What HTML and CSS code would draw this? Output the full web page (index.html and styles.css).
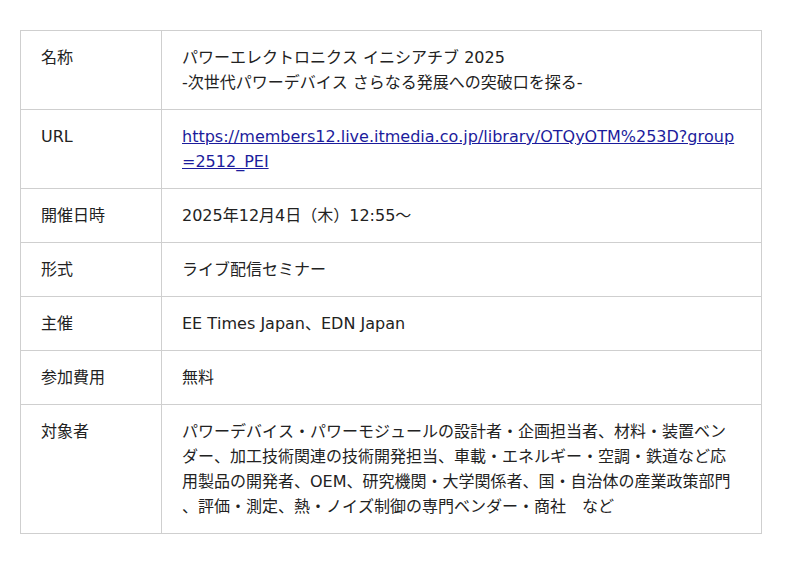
FILE: index.html
```html
<!DOCTYPE html>
<html lang="ja">
<head>
<meta charset="utf-8">
<link rel="stylesheet" href="styles.css">
</head>
<body>
<table class="info">
<colgroup><col class="c-label"><col class="c-value"></colgroup>
<tbody>
<tr><th>名称</th><td>パワーエレクトロニクス イニシアチブ 2025<br>-次世代パワーデバイス さらなる発展への突破口を探る-</td></tr>
<tr><th>URL</th><td><a href="#">https://members12.live.itmedia.co.jp/library/OTQyOTM%253D?group=2512_PEI</a></td></tr>
<tr><th>開催日時</th><td>2025年12月4日（木）12:55〜</td></tr>
<tr><th>形式</th><td>ライブ配信セミナー</td></tr>
<tr><th>主催</th><td>EE Times Japan、EDN Japan</td></tr>
<tr><th>参加費用</th><td>無料</td></tr>
<tr><th>対象者</th><td>パワーデバイス・パワーモジュールの設計者・企画担当者、材料・装置ベンダー、加工技術関連の技術開発担当、車載・エネルギー・空調・鉄道など応用製品の開発者、OEM、研究機関・大学関係者、国・自治体の産業政策部門、評価・測定、熱・ノイズ制御の専門ベンダー・商社　など</td></tr>
</tbody>
</table>
</body>
</html>
```
FILE: styles.css
```css
html, body {
  margin: 0;
  padding: 0;
  background: #fff;
}
body {
  padding: 30px 20px;
  font-family: "DejaVu Sans", "Noto Sans CJK JP", sans-serif;
  font-size: 16px;
  color: #222;
  font-kerning: none;
  text-spacing-trim: space-all;
}
.info {
  width: 742px;
  border-collapse: collapse;
  table-layout: fixed;
}
.c-label { width: 141px; }
.info th, .info td {
  border: 1px solid #cfcfcf;
  padding: 14px 20px;
  line-height: 25px;
  text-align: left;
  vertical-align: top;
  font-weight: normal;
  word-break: break-all;
  line-break: anywhere;
}
.info a {
  color: #1c1c9c;
  text-decoration: underline;
}
```
